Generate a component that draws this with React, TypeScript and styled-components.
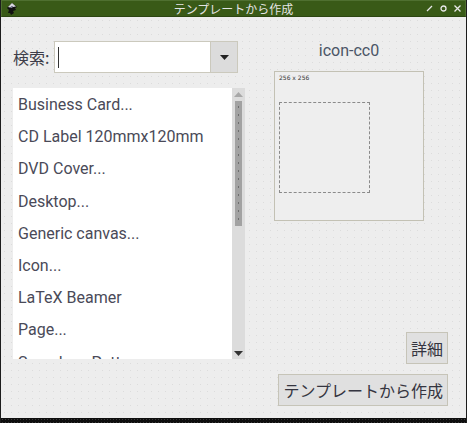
import React from "react";
import styled, { createGlobalStyle } from "styled-components";

const GlobalStyle = createGlobalStyle`
  html, body { margin: 0; padding: 0; background: #101010; }
  body { width: 467px; height: 423px; overflow: hidden; }
`;

const Window = styled.div`
  width: 467px;
  height: 423px;
  box-sizing: border-box;
  display: flex;
  flex-direction: column;
  background: #141414;
  border-left: 1px solid #1c1c1c;
  border-right: 1px solid #1c1c1c;
`;

const TitleBar = styled.div`
  height: 17px;
  box-sizing: border-box;
  display: flex;
  align-items: center;
  background: #395a17;
  border: 1px solid #4f7030;
  border-bottom-color: #2c4612;
  padding: 0 3px 0 2px;
`;

const TitleText = styled.div`
  flex: 1;
  text-align: center;
  color: #e4e4e4;
  font-family: "Noto Sans CJK JP", sans-serif;
  font-size: 12px;
  line-height: 15px;
  padding-left: 22px;
`;

const TitleButtons = styled.div`
  display: flex;
  gap: 5px;
  align-items: center;
`;

const Body = styled.div`
  flex: 1;
  display: flex;
  background-color: #ededed;
  background-image: radial-gradient(circle, #dcdcdc 0.7px, transparent 0.9px);
  background-size: 7px 7px;
  padding: 24px 18px 12px 12px;
  box-sizing: border-box;
`;

const BottomStrip = styled.div`
  height: 5px;
  background-color: #0e0e0e;
  background-image: radial-gradient(circle, #3a3a3a 0.7px, transparent 0.9px);
  background-size: 3px 3px;
`;

const LeftColumn = styled.div`
  width: 232px;
  display: flex;
  flex-direction: column;
  gap: 15px;
`;

const SearchRow = styled.div`
  display: flex;
  align-items: center;
  height: 32px;
`;

const Label = styled.label`
  font-family: "Noto Sans CJK JP", sans-serif;
  font-size: 16px;
  color: #3e3e4a;
  width: 41px;
`;

const InputBox = styled.div`
  width: 157px;
  height: 32px;
  box-sizing: border-box;
  background: #ffffff;
  border: 1px solid #cbc9bd;
  display: flex;
  align-items: center;
  padding-left: 3px;
`;

const Caret = styled.div`
  width: 1px;
  height: 21px;
  background: #333;
`;

const DropButton = styled.div`
  width: 27px;
  height: 32px;
  box-sizing: border-box;
  background: #dcdcdc;
  border: 1px solid #cbc9bd;
  border-left: none;
  display: flex;
  align-items: center;
  justify-content: center;
`;

const ListFrame = styled.div`
  height: 271px;
  display: flex;
  background: #ffffff;
  overflow: hidden;
`;

const ListItems = styled.div`
  flex: 1;
  padding-left: 5px;
  padding-top: 3px;
`;

const Item = styled.div`
  font-family: Roboto, "Noto Sans", sans-serif;
  font-size: 16px;
  color: #4a4a58;
  height: 32.2px;
  line-height: 27px;
  white-space: nowrap;
`;

const ScrollBar = styled.div`
  width: 13px;
  background: #dcdcdc;
  display: flex;
  flex-direction: column;
  align-items: center;
  padding: 4px 0 3px;
  box-sizing: border-box;
`;

const Thumb = styled.div`
  width: 7px;
  height: 125px;
  margin-top: 4px;
  background-color: #a2a2a2;
  background-image: radial-gradient(circle, #6e6e6e 0.6px, transparent 0.8px);
  background-size: 7px 8px;
  background-position: 0 2px;
`;

const ScrollSpacer = styled.div`
  flex: 1;
`;

const RightColumn = styled.div`
  flex: 1;
  display: flex;
  flex-direction: column;
  align-items: flex-end;
`;

const PreviewArea = styled.div`
  align-self: flex-start;
  margin-left: 29px;
  width: 150px;
  display: flex;
  flex-direction: column;
  align-items: center;
  gap: 9px;
`;

const PreviewTitle = styled.div`
  font-family: Roboto, "Noto Sans", sans-serif;
  font-size: 16px;
  color: #4a5566;
  line-height: 22px;
  margin-top: -1px;
`;

const PreviewBox = styled.div`
  width: 150px;
  height: 150px;
  box-sizing: border-box;
  border: 1px solid #c3c1b4;
  background: #eeeeee;
  padding: 2px 4px;
  display: flex;
  flex-direction: column;
`;

const SizeText = styled.div`
  font-family: "DejaVu Sans", sans-serif;
  font-size: 6px;
  color: #333;
  line-height: 7px;
`;

const InnerSquare = styled.div`
  width: 91px;
  height: 91px;
  box-sizing: border-box;
  border: 1px dashed #8a8a8a;
  margin-top: 21px;
`;

const Spacer = styled.div`
  flex: 1;
`;

const Button = styled.button<{ $mb?: number }>`
  font-family: "Noto Sans CJK JP", sans-serif;
  font-size: 16px;
  color: #353540;
  background: #e0e0e0;
  border: 1px solid #c6c4b8;
  border-radius: 0;
  height: 32px;
  padding: 0 4px;
  margin: 0 0 ${(p) => p.$mb ?? 0}px;
  line-height: 28px;
`;

const InkscapeLogo = () => (
  <svg width="16" height="14" viewBox="0 0 16 14">
    <path d="M8 1 L13 5 L11 6 L12 8 L9 9 L10 11 L7 13 L6 11 L4 11 L5 8 L3 6 L4 5 Z" fill="#111" />
    <path d="M8 1 L12 4.5 L9 5 L8 4 L6 5.5 L4 5 Z" fill="#d8d8e0" />
    <path d="M6 5.5 L8 4 L9 5 L7.5 6 Z" fill="#8a8aa8" />
  </svg>
);

const WinIcon = ({ kind }: { kind: "min" | "max" | "close" }) => (
  <svg width="9" height="9" viewBox="0 0 9 9" stroke="#e8e8e8" strokeWidth="1.3" fill="none">
    {kind === "min" && <path d="M2 7 L7 2" />}
    {kind === "max" && <circle cx="4.5" cy="4.5" r="2.5" />}
    {kind === "close" && <path d="M1.5 1.5 L7.5 7.5 M7.5 1.5 L1.5 7.5" />}
  </svg>
);

const Arrow = ({ up, color }: { up?: boolean; color: string }) => (
  <svg width="9" height="5" viewBox="0 0 9 5">
    <path d={up ? "M0 5 L4.5 0 L9 5 Z" : "M0 0 L9 0 L4.5 5 Z"} fill={color} />
  </svg>
);

const items = [
  "Business Card...",
  "CD Label 120mmx120mm",
  "DVD Cover...",
  "Desktop...",
  "Generic canvas...",
  "Icon...",
  "LaTeX Beamer",
  "Page...",
  "Seamless Pattern...",
];

export default function App() {
  return (
    <>
      <GlobalStyle />
      <Window>
        <TitleBar>
          <InkscapeLogo />
          <TitleText>テンプレートから作成</TitleText>
          <TitleButtons>
            <WinIcon kind="min" />
            <WinIcon kind="max" />
            <WinIcon kind="close" />
          </TitleButtons>
        </TitleBar>
        <Body>
          <LeftColumn>
            <SearchRow>
              <Label>検索:</Label>
              <InputBox>
                <Caret />
              </InputBox>
              <DropButton>
                <Arrow color="#222" />
              </DropButton>
            </SearchRow>
            <ListFrame>
              <ListItems>
                {items.map((t) => (
                  <Item key={t}>{t}</Item>
                ))}
              </ListItems>
              <ScrollBar>
                <Arrow up color="#a8a8a8" />
                <Thumb />
                <ScrollSpacer />
                <Arrow color="#333" />
              </ScrollBar>
            </ListFrame>
          </LeftColumn>
          <RightColumn>
            <PreviewArea>
              <PreviewTitle>icon-cc0</PreviewTitle>
              <PreviewBox>
                <SizeText>256 x 256</SizeText>
                <InnerSquare />
              </PreviewBox>
            </PreviewArea>
            <Spacer />
            <Button $mb={10}>詳細</Button>
            <Button>テンプレートから作成</Button>
          </RightColumn>
        </Body>
        <BottomStrip />
      </Window>
    </>
  );
}
